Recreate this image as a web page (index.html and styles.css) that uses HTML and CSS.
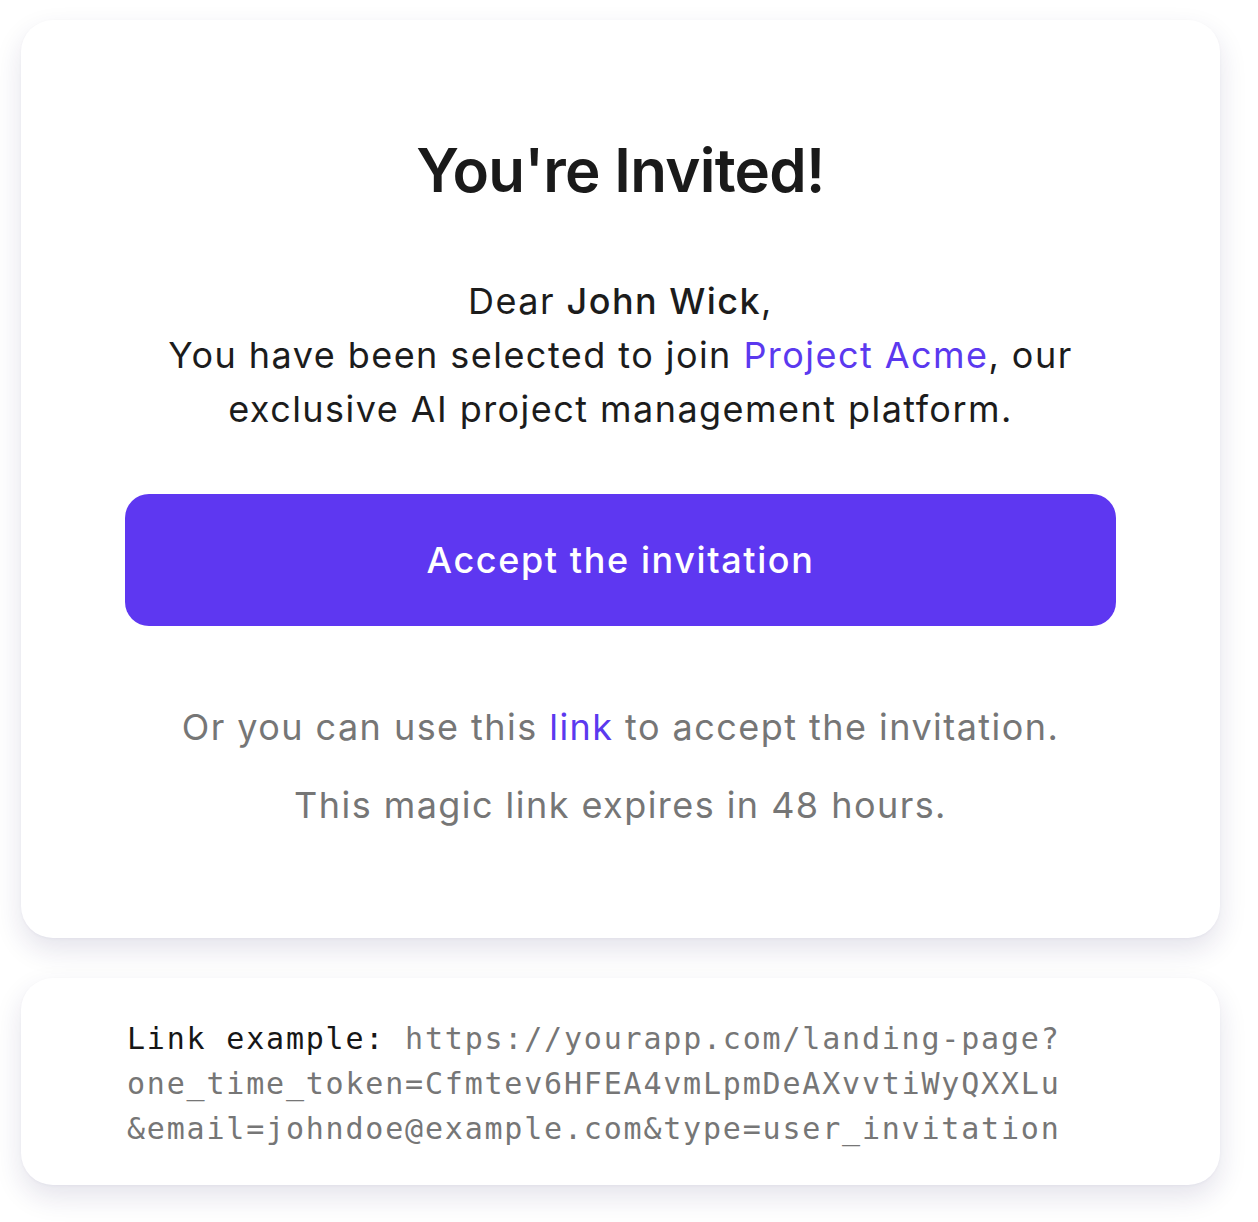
FILE: index.html
```html
<!DOCTYPE html>
<html lang="en">
<head>
    <meta charset="UTF-8">
    <meta name="viewport" content="width=device-width, initial-scale=1.0">
    <title>You're Invited!</title>
    <link rel="stylesheet" href="styles.css">
</head>
<body>
    <div class="page">
        <div class="card invite">
            <h1>You're Invited!</h1>
            <p class="message">
                Dear <strong>John Wick</strong>,<br>
                You have been selected to join <a href="#">Project Acme</a>, our exclusive AI project management platform.
            </p>
            <a class="accept-btn" href="#">Accept the invitation</a>
            <p class="note">Or you can use this <a href="#">link</a> to accept the invitation.</p>
            <p class="note">This magic link expires in 48 hours.</p>
        </div>
        <div class="card example">
            <code><span class="label">Link example:</span> https://yourapp.com/landing-page?<br>one_time_token=Cfmtev6HFEA4vmLpmDeAXvvtiWyQXXLu<br>&amp;email=johndoe@example.com&amp;type=user_invitation</code>
        </div>
    </div>
</body>
</html>
```

FILE: styles.css
```css
body {
    font-family: Inter, "Noto Sans", sans-serif;
    background-color: #fff;
    color: #1c1c1c;
    margin: 0;
    padding: 0;
}
.page {
    width: 1199px;
    padding: 20px 0 37px 21px;
    display: flex;
    flex-direction: column;
    gap: 40px;
}
.card {
    background-color: #fff;
    border-radius: 32px;
    box-shadow: 0 12px 28px rgba(36, 28, 90, 0.12), 0 1px 3px rgba(36, 28, 90, 0.04);
}
a {
    text-decoration: none;
    color: #5b39ef;
}
.invite {
    padding: 114px 104px 106px;
    text-align: center;
}
h1 {
    margin: 0;
    font-size: 60px;
    line-height: 72px;
    font-weight: 600;
    letter-spacing: -0.7px;
    color: #1a1a1a;
}
.message {
    margin: 68px 0 0;
    font-size: 36px;
    line-height: 54px;
    letter-spacing: 1.45px;
}
.message strong {
    font-weight: 500;
}
.accept-btn {
    display: flex;
    align-items: center;
    justify-content: center;
    margin-top: 58px;
    height: 132px;
    border-radius: 24px;
    background-color: #5e37f1;
    color: #fff;
    font-size: 36px;
    font-weight: 500;
    letter-spacing: 1.6px;
}
.note {
    margin: 24px 0 0;
    font-size: 36px;
    line-height: 54px;
    letter-spacing: 1.45px;
    color: #767676;
}
.accept-btn + .note {
    margin-top: 74px;
}
.example {
    padding: 38px 104px 34px 106px;
}
.example code {
    display: block;
    font-family: "DejaVu Sans Mono", "Liberation Mono", monospace;
    font-size: 30px;
    line-height: 45px;
    letter-spacing: 1.8px;
    color: #767676;
}
.example .label {
    color: #161616;
}
```
